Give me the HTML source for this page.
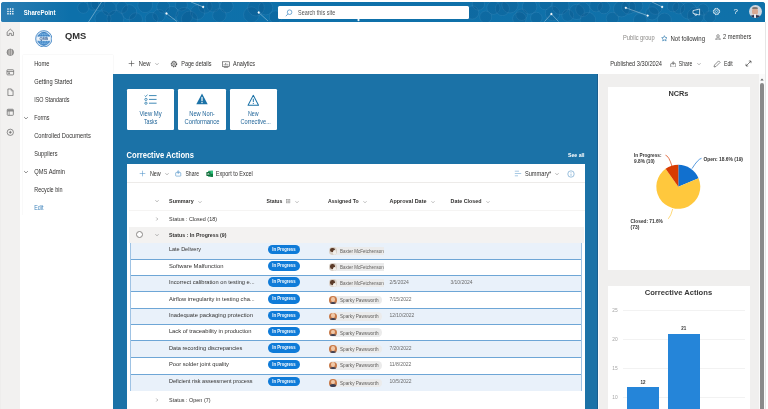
<!DOCTYPE html>
<html lang="en"><head><meta charset="utf-8"><title>QMS - Home</title>
<style>
html,body{margin:0;padding:0;background:#fff;}
body{width:768px;height:409px;position:relative;overflow:hidden;font-family:"Liberation Sans", sans-serif;}
#pg{will-change:transform;}
#pg div,#pg span,#pg svg{position:absolute;}
#pg span{white-space:nowrap;line-height:1;transform-origin:0 50%;}
</style></head><body><div id="pg" style="position:absolute;left:0;top:0;width:768px;height:409px;overflow:hidden">
<div style="left:0.8px;top:2px;width:764.2px;height:19.5px;background:#0d70aa;border-radius:3px 3px 0 2.5px;overflow:hidden"><svg width="765" height="20" viewBox="0 0 765 20" style="left:0;top:0"><defs><linearGradient id="tb" x1="0" x2="1" y1="0" y2="0"><stop offset="0" stop-color="#2a7db3"/><stop offset="0.09" stop-color="#0d70aa"/><stop offset="1" stop-color="#1071a9"/></linearGradient></defs><rect width="765" height="20" fill="url(#tb)"/><g fill="rgba(8,50,100,0.10)" stroke="rgba(170,215,245,0.22)" stroke-width="0.45"><circle cx="82.3" cy="5.7" r="5.6"/><circle cx="92.0" cy="2.6" r="5.7"/><circle cx="96.9" cy="1.8" r="6.8"/><circle cx="102.0" cy="16.8" r="8.0"/><circle cx="108.0" cy="6.4" r="7.2"/><circle cx="114.4" cy="16.7" r="8.4"/><circle cx="121.0" cy="5.4" r="5.9"/><circle cx="128.2" cy="10.2" r="7.5"/><circle cx="134.8" cy="17.4" r="6.6"/><circle cx="144.2" cy="3.2" r="7.4"/><circle cx="150.6" cy="16.8" r="6.4"/><circle cx="157.9" cy="13.6" r="6.2"/><circle cx="162.2" cy="4.7" r="6.4"/><circle cx="170.8" cy="10.7" r="6.4"/><circle cx="180.4" cy="3.0" r="6.0"/><circle cx="183.3" cy="13.8" r="8.4"/><circle cx="188.5" cy="17.2" r="8.1"/><circle cx="196.6" cy="10.3" r="7.2"/><circle cx="204.2" cy="4.3" r="6.9"/><circle cx="212.2" cy="3.7" r="6.4"/><circle cx="218.4" cy="13.4" r="6.7"/><circle cx="225.6" cy="4.3" r="6.6"/><circle cx="250.4" cy="12.7" r="7.8"/><circle cx="255.0" cy="5.7" r="8.3"/><circle cx="264.7" cy="5.8" r="7.1"/><circle cx="274.6" cy="15.1" r="6.3"/><circle cx="471.2" cy="10.5" r="6.6"/><circle cx="477.4" cy="2.0" r="6.2"/><circle cx="484.7" cy="15.0" r="6.0"/><circle cx="492.4" cy="5.8" r="6.6"/><circle cx="501.4" cy="6.6" r="7.0"/><circle cx="509.0" cy="2.9" r="8.1"/><circle cx="518.4" cy="16.7" r="6.7"/><circle cx="520.6" cy="12.7" r="5.7"/><circle cx="528.6" cy="4.8" r="7.3"/><circle cx="535.3" cy="16.0" r="5.8"/><circle cx="544.2" cy="1.7" r="6.1"/><circle cx="551.6" cy="11.4" r="7.3"/><circle cx="559.5" cy="4.0" r="8.5"/><circle cx="566.8" cy="13.4" r="5.9"/><circle cx="575.8" cy="9.9" r="7.6"/><circle cx="581.8" cy="7.4" r="7.1"/><circle cx="586.9" cy="18.2" r="7.8"/><circle cx="595.1" cy="3.6" r="6.3"/><circle cx="602.9" cy="5.6" r="6.2"/><circle cx="611.4" cy="16.5" r="6.2"/><circle cx="620.5" cy="6.9" r="8.0"/><circle cx="627.6" cy="5.1" r="7.0"/><circle cx="635.0" cy="3.9" r="6.9"/><circle cx="639.2" cy="18.4" r="6.8"/><circle cx="651.2" cy="11.4" r="6.6"/><circle cx="654.3" cy="5.9" r="6.5"/><circle cx="663.4" cy="18.0" r="6.9"/><circle cx="671.9" cy="4.0" r="5.9"/><circle cx="677.7" cy="5.9" r="6.0"/><circle cx="687.6" cy="8.8" r="8.3"/><circle cx="694.7" cy="13.7" r="8.3"/><circle cx="702.1" cy="7.5" r="5.6"/><circle cx="708.8" cy="14.9" r="5.9"/></g><g stroke="rgba(255,255,255,0.7)" stroke-width="0.5" fill="#fff"><line x1="87.5" y1="20" x2="100.5" y2="0"/><line x1="165.5" y1="11.5" x2="176" y2="19.5"/><circle cx="165.5" cy="11.5" r="0.9"/><line x1="202.2" y1="4.9" x2="190" y2="0"/><circle cx="202.2" cy="4.9" r="0.9"/><line x1="257.7" y1="10.5" x2="267" y2="19"/><circle cx="257.7" cy="10.5" r="0.9"/><circle cx="357.5" cy="18" r="0.9"/><line x1="550.4" y1="12" x2="543.5" y2="19.5"/><line x1="550.4" y1="12" x2="557.5" y2="19.5"/><circle cx="550.4" cy="12" r="0.9"/><line x1="624.8" y1="5.8" x2="646.7" y2="13.6"/><circle cx="624.8" cy="5.8" r="0.9"/><circle cx="646.7" cy="13.6" r="0.9"/><line x1="661.2" y1="4.9" x2="651" y2="0"/><circle cx="661.2" cy="4.9" r="0.9"/></g></svg></div>
<svg width="7.2" height="7.2" viewBox="0 0 8 8" style="left:6.9px;top:8.2px" fill="#fff"><rect x="0.3" y="0.3" width="1.6" height="1.6" rx="0.4"/><rect x="0.3" y="3.0" width="1.6" height="1.6" rx="0.4"/><rect x="0.3" y="5.7" width="1.6" height="1.6" rx="0.4"/><rect x="3.0" y="0.3" width="1.6" height="1.6" rx="0.4"/><rect x="3.0" y="3.0" width="1.6" height="1.6" rx="0.4"/><rect x="3.0" y="5.7" width="1.6" height="1.6" rx="0.4"/><rect x="5.7" y="0.3" width="1.6" height="1.6" rx="0.4"/><rect x="5.7" y="3.0" width="1.6" height="1.6" rx="0.4"/><rect x="5.7" y="5.7" width="1.6" height="1.6" rx="0.4"/></svg>
<div style="left:278px;top:5.5px;width:191px;height:13.2px;background:#fff;border-radius:1.5px;"></div>
<svg width="8" height="8" viewBox="0 0 8 8" style="left:285px;top:8.5px" fill="none" stroke="#3d86c0" stroke-width="0.7"><circle cx="4.6" cy="3.2" r="2.3"/><line x1="3" y1="4.9" x2="0.8" y2="7.2"/></svg>
<svg width="9" height="8" viewBox="0 0 9 8" style="left:692px;top:7.5px" fill="none" stroke="#fff" stroke-width="0.7" stroke-linejoin="round"><path d="M1 2.6 L7.6 1 L7.6 7 L1 5.4 Z"/><path d="M2.6 5.8 L3 7.2 L4.6 7.2 L4.4 6.2"/></svg>
<svg width="9" height="9" viewBox="0 0 9 9" style="left:711.6px;top:7px" fill="none" stroke="rgba(255,255,255,0.9)" stroke-width="0.7"><circle cx="4.5" cy="4.5" r="3.2" stroke-dasharray="1.5 1" stroke-width="0.9"/><circle cx="4.5" cy="4.5" r="2.7"/><circle cx="4.5" cy="4.5" r="1.1" stroke-width="0.6"/></svg>
<div style="left:748.5px;top:5.4px;width:13px;height:13px;border-radius:50%;overflow:hidden;background:#cfd6df"><div style="left:3.4px;top:2.4px;width:6.2px;height:7.2px;border-radius:45%;background:#d8a892"></div><div style="left:3.2px;top:1.4px;width:6.6px;height:2.6px;border-radius:50% 50% 20% 20%;background:#7d7670"></div><div style="left:0.5px;top:9.3px;width:12px;height:6px;border-radius:45% 45% 0 0;background:#2c3350"></div><div style="left:5.5px;top:9px;width:2px;height:4px;background:#e8e8ee"></div></div>
<div style="left:765px;top:21.5px;width:0.6000000000000227px;height:387.5px;background:#e6e6e6;"></div>
<div style="left:0px;top:22px;width:20.2px;height:387px;background:#f2f1f0;"></div>
<div style="left:0px;top:22px;width:1px;height:387px;background:#eeedec;"></div>
<svg width="8.6" height="8.6" viewBox="0 0 9 9" style="left:6.3px;top:27.999999999999996px" fill="none" stroke="#666" stroke-width="0.75" stroke-linejoin="round"><path d="M1.2 4.2 L4.5 1.2 L7.8 4.2 L7.8 7.8 L5.6 7.8 L5.6 5.6 L3.4 5.6 L3.4 7.8 L1.2 7.8 Z"/></svg>
<svg width="8.6" height="8.6" viewBox="0 0 9 9" style="left:6.3px;top:47.6px" fill="none" stroke="#666" stroke-width="0.75" stroke-linejoin="round"><circle cx="4.5" cy="4.5" r="3.4" fill="#9a9896" stroke="#777"/><path d="M3.3 1.3 L3.3 7.7 M5.7 1.3 L5.7 7.7" stroke="#f0efee" stroke-width="0.5"/></svg>
<svg width="8.6" height="8.6" viewBox="0 0 9 9" style="left:6.3px;top:67.7px" fill="none" stroke="#666" stroke-width="0.75" stroke-linejoin="round"><rect x="1" y="1.8" width="7" height="5.4" rx="0.8"/><path d="M1 3.6 L8 3.6" /><rect x="2.2" y="4.6" width="2" height="1.6" fill="#888" stroke="none"/></svg>
<svg width="8.6" height="8.6" viewBox="0 0 9 9" style="left:6.3px;top:87.7px" fill="none" stroke="#666" stroke-width="0.75" stroke-linejoin="round"><path d="M2 1 L5.6 1 L7.4 2.9 L7.4 8 L2 8 Z"/><path d="M5.4 1 L5.4 3 L7.4 3" stroke-width="0.5"/></svg>
<svg width="8.6" height="8.6" viewBox="0 0 9 9" style="left:6.3px;top:107.7px" fill="none" stroke="#666" stroke-width="0.75" stroke-linejoin="round"><rect x="1.3" y="1.3" width="6.4" height="6.4" rx="0.8"/><path d="M1.3 3.3 L7.7 3.3 M3.3 3.3 L3.3 7.7" stroke-width="0.6"/><rect x="1.6" y="1.6" width="5.8" height="1.5" fill="#888" stroke="none"/></svg>
<svg width="8.6" height="8.6" viewBox="0 0 9 9" style="left:6.3px;top:127.7px" fill="none" stroke="#666" stroke-width="0.75" stroke-linejoin="round"><circle cx="4.5" cy="4.5" r="3.3"/><path d="M4.5 3 L4.5 6 M3 4.5 L6 4.5" stroke-width="0.8"/></svg>
<svg width="17.6" height="17.6" viewBox="0 0 19 19" style="left:34.6px;top:29.5px"><circle cx="9.5" cy="9.5" r="8.8" fill="#dbeaf7" stroke="#3b7fc2" stroke-width="0.9"/><circle cx="9.5" cy="9.5" r="7" fill="#7db6e6" stroke="#3b7fc2" stroke-width="0.4"/><g fill="none" stroke="#2f74b8" stroke-width="0.6"><ellipse cx="9.5" cy="9.5" rx="3.2" ry="7"/><ellipse cx="9.5" cy="9.5" rx="6" ry="7"/><path d="M2.8 6 L16.2 6 M2.8 13 L16.2 13 M9.5 2.5 L9.5 16.5"/></g><rect x="2.2" y="7.4" width="14.6" height="4.2" fill="#eef4fa" rx="0.6"/><text x="9.5" y="11" font-size="4.2" font-weight="700" text-anchor="middle" fill="#1f4f8c" font-family="Liberation Sans, sans-serif">QMS</text></svg>
<svg width="6.8" height="6.8" viewBox="0 0 8 8" style="left:660.6px;top:35.2px" fill="none" stroke="#1e6fa8" stroke-width="0.7" stroke-linejoin="round"><path d="M4 0.8 L4.95 2.9 L7.2 3.15 L5.5 4.7 L6 7 L4 5.85 L2 7 L2.5 4.7 L0.8 3.15 L3.05 2.9 Z"/></svg>
<svg width="6" height="6.8" viewBox="0 0 7 8" style="left:715.4px;top:33.6px" fill="none" stroke="#555" stroke-width="0.7"><circle cx="3.5" cy="2.3" r="1.5"/><path d="M1 7 L1 5.6 Q1 4.8 1.8 4.8 L5.2 4.8 Q6 4.8 6 5.6 L6 7 Z"/></svg>
<div style="left:23.4px;top:54.6px;width:89.6px;height:355px;background:#fff;box-shadow:0 0 1.5px rgba(0,0,0,0.10)"></div>
<div style="left:22px;top:215px;width:91.3px;height:194px;background:#fff;"></div>
<svg width="6" height="4" viewBox="-3 -2 6 4" style="left:23.3px;top:115.8px" fill="none" stroke="#555" stroke-width="0.65"><path d="M-1.9 -0.95 L0 0.95 L1.9 -0.95"/></svg>
<svg width="6" height="4" viewBox="-3 -2 6 4" style="left:23.3px;top:169.9px" fill="none" stroke="#555" stroke-width="0.65"><path d="M-1.9 -0.95 L0 0.95 L1.9 -0.95"/></svg>
<svg width="7" height="7" viewBox="0 0 7 7" style="left:128.2px;top:60.4px" stroke="#444" stroke-width="0.6"><path d="M3.5 0.7 L3.5 6.3 M0.7 3.5 L6.3 3.5"/></svg>
<svg width="6" height="4" viewBox="-3 -2 6 4" style="left:153.7px;top:62.099999999999994px" fill="none" stroke="#777" stroke-width="0.55"><path d="M-1.6 -0.8 L0 0.8 L1.6 -0.8"/></svg>
<svg width="8" height="8" viewBox="0 0 9 9" style="left:170.4px;top:59.9px" fill="none" stroke="#444" stroke-width="0.7"><circle cx="4.5" cy="4.5" r="3" stroke-dasharray="1.3 0.9" stroke-width="1.2"/><circle cx="4.5" cy="4.5" r="2.5"/><circle cx="4.5" cy="4.5" r="1" stroke-width="0.6"/></svg>
<svg width="8" height="7" viewBox="0 0 8 7" style="left:222px;top:60.5px" fill="none" stroke="#444" stroke-width="0.6"><rect x="0.6" y="0.8" width="6.8" height="4.6"/><path d="M1.8 6.4 L6.2 6.4 M2.2 4.4 L2.2 3.2 M3.6 4.4 L3.6 2 M5 4.4 L5 2.8 M6 4.4 L6 3.6" /></svg>
<svg width="6.8" height="6.8" viewBox="0 0 8 8" style="left:669.5px;top:60.7px" fill="none" stroke="#555" stroke-width="0.7"><rect x="0.8" y="3" width="6" height="4.2" rx="0.6"/><path d="M3.8 4.8 L3.8 0.9 M2.4 2.2 L3.8 0.8 L5.2 2.2"/></svg>
<svg width="6" height="4" viewBox="-3 -2 6 4" style="left:696px;top:62.099999999999994px" fill="none" stroke="#777" stroke-width="0.55"><path d="M-1.6 -0.8 L0 0.8 L1.6 -0.8"/></svg>
<svg width="8" height="8" viewBox="0 0 8 8" style="left:713px;top:59.9px" fill="none" stroke="#444" stroke-width="0.6" stroke-linejoin="round"><path d="M1 7 L1.5 5 L5.6 0.9 L7.1 2.4 L3 6.5 Z"/></svg>
<svg width="7" height="7" viewBox="0 0 7 7" style="left:744.5px;top:60.3px" fill="none" stroke="#333" stroke-width="0.6"><path d="M1 6 L6 1 M3.8 1 L6 1 L6 3.2 M1 3.8 L1 6 L3.2 6"/></svg>
<div style="left:113.3px;top:74px;width:484.7px;height:335px;background:#1b72a7;"></div>
<div style="left:126.8px;top:88.5px;width:47.60000000000001px;height:41.0px;background:#fff;border-radius:1.2px;"></div>
<div style="left:178.1px;top:88.5px;width:48.0px;height:41.0px;background:#fff;border-radius:1.2px;"></div>
<div style="left:229.7px;top:88.5px;width:47.30000000000001px;height:41.0px;background:#fff;border-radius:1.2px;"></div>
<svg width="13" height="11" viewBox="0 0 12 11" preserveAspectRatio="none" style="left:144.29999999999998px;top:94.1px" fill="none" stroke="#1b72a7" stroke-width="0.8"><path d="M4.6 1.6 L11.6 1.6 M4.6 5.4 L11.6 5.4 M4.6 9.2 L11.6 9.2"/><path d="M0.6 1.6 L1.6 2.6 L3.2 0.6" stroke-width="0.7"/><circle cx="1.8" cy="5.4" r="1.1" stroke-width="0.7"/><circle cx="1.8" cy="9.2" r="1.1" stroke-width="0.7"/></svg>
<svg width="12" height="12" viewBox="0 0 12 11" preserveAspectRatio="none" style="left:195.9px;top:93.4px"><path d="M6 0.4 L11.7 10.4 L0.3 10.4 Z" fill="#1b72a7"/><rect x="5.4" y="3.6" width="1.2" height="3.8" fill="#fff"/><rect x="5.4" y="8.1" width="1.2" height="1.2" fill="#fff"/></svg>
<svg width="12.6" height="12.4" viewBox="0 0 12 11" preserveAspectRatio="none" style="left:246.8px;top:93.5px"><path d="M6 1.2 L11 10 L1 10 Z" fill="none" stroke="#1b72a7" stroke-width="0.95" stroke-linejoin="round"/><rect x="5.55" y="4.2" width="0.9" height="3" fill="#1b72a7"/><rect x="5.55" y="8" width="0.9" height="0.9" fill="#1b72a7"/></svg>
<div style="left:126.8px;top:163.9px;width:457.99999999999994px;height:245.1px;background:#fff;"></div>
<svg width="7" height="7" viewBox="0 0 7 7" style="left:138.6px;top:169.9px" stroke="#4f93c9" stroke-width="0.55"><path d="M3.5 0.7 L3.5 6.3 M0.7 3.5 L6.3 3.5"/></svg>
<svg width="6" height="4" viewBox="-3 -2 6 4" style="left:163.5px;top:171.6px" fill="none" stroke="#777" stroke-width="0.55"><path d="M-1.6 -0.8 L0 0.8 L1.6 -0.8"/></svg>
<svg width="6.8" height="6.8" viewBox="0 0 8 8" style="left:175.4px;top:170.2px" fill="none" stroke="#4f93c9" stroke-width="0.7"><rect x="0.8" y="3" width="6" height="4.2" rx="0.6"/><path d="M3.8 4.8 L3.8 0.9 M2.4 2.2 L3.8 0.8 L5.2 2.2"/></svg>
<svg width="7.6" height="7.6" viewBox="0 0 8 8" style="left:205.9px;top:169.5px"><rect x="2.2" y="0.8" width="5.3" height="6.4" rx="0.5" fill="#21a366"/><rect x="4.8" y="0.8" width="2.7" height="3.2" fill="#33c481"/><rect x="4.8" y="4" width="2.7" height="3.2" fill="#107c41"/><rect x="0.4" y="2" width="4.2" height="4.2" rx="0.4" fill="#0e6b37"/><path d="M1.5 3 L3.5 5.2 M3.5 3 L1.5 5.2" stroke="#fff" stroke-width="0.6"/></svg>
<svg width="8" height="7" viewBox="0 0 8 7" style="left:514.3px;top:170px" stroke="#6fa6d2" stroke-width="0.6"><path d="M0.8 1.2 L5 1.2 M0.8 3.5 L7.2 3.5 M0.8 5.8 L4 5.8"/></svg>
<svg width="6" height="4" viewBox="-3 -2 6 4" style="left:554.2px;top:171.6px" fill="none" stroke="#777" stroke-width="0.55"><path d="M-1.6 -0.8 L0 0.8 L1.6 -0.8"/></svg>
<svg width="8" height="8" viewBox="0 0 8 8" style="left:566.7px;top:169.5px" fill="none" stroke="#3a82bc" stroke-width="0.5"><circle cx="4" cy="4" r="3.2"/><path d="M4 3.6 L4 5.8 M4 2.2 L4 2.9"/></svg>
<div style="left:126.8px;top:181.8px;width:457.99999999999994px;height:0.5px;background:#edebe9;"></div>
<svg width="6" height="4" viewBox="-3 -2 6 4" style="left:154px;top:199.4px" fill="none" stroke="#777" stroke-width="0.55"><path d="M-1.6 -0.8 L0 0.8 L1.6 -0.8"/></svg>
<svg width="6" height="4" viewBox="-3 -2 6 4" style="left:196.5px;top:199.5px" fill="none" stroke="#888" stroke-width="0.55"><path d="M-1.6 -0.8 L0 0.8 L1.6 -0.8"/></svg>
<svg width="5" height="5" viewBox="0 0 5 5" style="left:285.6px;top:198.9px" fill="none" stroke="#888" stroke-width="0.5"><rect x="0.5" y="0.5" width="3.4" height="3.4"/><path d="M0.5 2.2 L3.9 2.2 M2.2 0.5 L2.2 3.9"/></svg>
<svg width="6" height="4" viewBox="-3 -2 6 4" style="left:293.5px;top:199.5px" fill="none" stroke="#888" stroke-width="0.55"><path d="M-1.6 -0.8 L0 0.8 L1.6 -0.8"/></svg>
<svg width="6" height="4" viewBox="-3 -2 6 4" style="left:361.7px;top:199.5px" fill="none" stroke="#888" stroke-width="0.55"><path d="M-1.6 -0.8 L0 0.8 L1.6 -0.8"/></svg>
<svg width="6" height="4" viewBox="-3 -2 6 4" style="left:429.5px;top:199.5px" fill="none" stroke="#888" stroke-width="0.55"><path d="M-1.6 -0.8 L0 0.8 L1.6 -0.8"/></svg>
<svg width="6" height="4" viewBox="-3 -2 6 4" style="left:484.5px;top:199.5px" fill="none" stroke="#888" stroke-width="0.55"><path d="M-1.6 -0.8 L0 0.8 L1.6 -0.8"/></svg>
<div style="left:128.8px;top:209.5px;width:455.99999999999994px;height:0.5px;background:#f5f4f3;"></div>
<svg width="4" height="6" viewBox="-2 -3 4 6" style="left:155px;top:215.7px" fill="none" stroke="#777" stroke-width="0.55"><path d="M-0.75 -1.5 L0.75 0 L-0.75 1.5"/></svg>
<div style="left:128.8px;top:226.9px;width:454.90000000000003px;height:15.799999999999983px;background:#f3f2f1;"></div>
<div style="left:135.9px;top:231.1px;width:7.2px;height:7.2px;border:0.55px solid #8a8886;border-radius:50%;background:#fff;box-sizing:border-box"></div>
<svg width="6" height="4" viewBox="-3 -2 6 4" style="left:153.8px;top:233.1px" fill="none" stroke="#777" stroke-width="0.55"><path d="M-1.6 -0.8 L0 0.8 L1.6 -0.8"/></svg>
<div style="left:130.3px;top:242.7px;width:451.49999999999994px;height:16.400000000000034px;background:#e9f1fa;"></div>
<div style="left:268.4px;top:245.00px;width:31.2px;height:9.4px;border-radius:5px;background:#0f7bd8"></div>
<div style="left:328.6px;top:246.50px;width:55.6px;height:8.6px;background:#ebebeb;border-radius:4.3px 0 0 4.3px"></div>
<div style="left:329.2px;top:247.00px;width:7.6px;height:7.6px;border-radius:50%;overflow:hidden;background:#d8cfc6"><div style="left:1px;top:0.6px;width:4.6px;height:4.6px;border-radius:50%;background:#5a3a28"></div><div style="left:3.4px;top:3.2px;width:3.8px;height:4.6px;border-radius:50%;background:#f2eee8"></div></div>
<div style="left:130.3px;top:259.1px;width:451.49999999999994px;height:15.899999999999977px;background:#fff;"></div>
<div style="left:130.3px;top:258.75px;width:451.49999999999994px;height:0.6999999999999886px;background:#6ea6d6;"></div>
<div style="left:268.4px;top:261.40px;width:31.2px;height:9.4px;border-radius:5px;background:#0f7bd8"></div>
<div style="left:328.6px;top:262.90px;width:55.6px;height:8.6px;background:#ebebeb;border-radius:4.3px 0 0 4.3px"></div>
<div style="left:329.2px;top:263.40px;width:7.6px;height:7.6px;border-radius:50%;overflow:hidden;background:#d8cfc6"><div style="left:1px;top:0.6px;width:4.6px;height:4.6px;border-radius:50%;background:#5a3a28"></div><div style="left:3.4px;top:3.2px;width:3.8px;height:4.6px;border-radius:50%;background:#f2eee8"></div></div>
<div style="left:130.3px;top:275.0px;width:451.49999999999994px;height:16.399999999999977px;background:#e9f1fa;"></div>
<div style="left:130.3px;top:274.65px;width:451.49999999999994px;height:0.7000000000000455px;background:#6ea6d6;"></div>
<div style="left:268.4px;top:277.40px;width:31.2px;height:9.4px;border-radius:5px;background:#0f7bd8"></div>
<div style="left:328.6px;top:278.90px;width:55.6px;height:8.6px;background:#ebebeb;border-radius:4.3px 0 0 4.3px"></div>
<div style="left:329.2px;top:279.40px;width:7.6px;height:7.6px;border-radius:50%;overflow:hidden;background:#d8cfc6"><div style="left:1px;top:0.6px;width:4.6px;height:4.6px;border-radius:50%;background:#5a3a28"></div><div style="left:3.4px;top:3.2px;width:3.8px;height:4.6px;border-radius:50%;background:#f2eee8"></div></div>
<div style="left:130.3px;top:291.4px;width:451.49999999999994px;height:16.5px;background:#fff;"></div>
<div style="left:130.3px;top:291.05px;width:451.49999999999994px;height:0.6999999999999886px;background:#6ea6d6;"></div>
<div style="left:268.4px;top:294.30px;width:31.2px;height:9.4px;border-radius:5px;background:#0f7bd8"></div>
<div style="left:328.6px;top:295.80px;width:53px;height:8.6px;background:#ebebeb;border-radius:4.3px"></div>
<div style="left:329.2px;top:296.30px;width:7.6px;height:7.6px;border-radius:50%;overflow:hidden;background:#c97b4a"><div style="left:1.8px;top:0.8px;width:4px;height:4.6px;border-radius:50%;background:#f0c8a8"></div><div style="left:0.8px;top:5.4px;width:6px;height:3px;border-radius:50% 50% 0 0;background:#3a3f55"></div></div>
<div style="left:130.3px;top:307.9px;width:451.49999999999994px;height:16.400000000000034px;background:#e9f1fa;"></div>
<div style="left:130.3px;top:307.55px;width:451.49999999999994px;height:0.6999999999999886px;background:#6ea6d6;"></div>
<div style="left:268.4px;top:310.70px;width:31.2px;height:9.4px;border-radius:5px;background:#0f7bd8"></div>
<div style="left:328.6px;top:312.20px;width:53px;height:8.6px;background:#ebebeb;border-radius:4.3px"></div>
<div style="left:329.2px;top:312.70px;width:7.6px;height:7.6px;border-radius:50%;overflow:hidden;background:#c97b4a"><div style="left:1.8px;top:0.8px;width:4px;height:4.6px;border-radius:50%;background:#f0c8a8"></div><div style="left:0.8px;top:5.4px;width:6px;height:3px;border-radius:50% 50% 0 0;background:#3a3f55"></div></div>
<div style="left:130.3px;top:324.3px;width:451.49999999999994px;height:16.399999999999977px;background:#fff;"></div>
<div style="left:130.3px;top:323.95px;width:451.49999999999994px;height:0.6999999999999886px;background:#6ea6d6;"></div>
<div style="left:268.4px;top:326.90px;width:31.2px;height:9.4px;border-radius:5px;background:#0f7bd8"></div>
<div style="left:328.6px;top:328.40px;width:53px;height:8.6px;background:#ebebeb;border-radius:4.3px"></div>
<div style="left:329.2px;top:328.90px;width:7.6px;height:7.6px;border-radius:50%;overflow:hidden;background:#c97b4a"><div style="left:1.8px;top:0.8px;width:4px;height:4.6px;border-radius:50%;background:#f0c8a8"></div><div style="left:0.8px;top:5.4px;width:6px;height:3px;border-radius:50% 50% 0 0;background:#3a3f55"></div></div>
<div style="left:130.3px;top:340.7px;width:451.49999999999994px;height:16.80000000000001px;background:#e9f1fa;"></div>
<div style="left:130.3px;top:340.35px;width:451.49999999999994px;height:0.6999999999999886px;background:#6ea6d6;"></div>
<div style="left:268.4px;top:343.40px;width:31.2px;height:9.4px;border-radius:5px;background:#0f7bd8"></div>
<div style="left:328.6px;top:344.90px;width:53px;height:8.6px;background:#ebebeb;border-radius:4.3px"></div>
<div style="left:329.2px;top:345.40px;width:7.6px;height:7.6px;border-radius:50%;overflow:hidden;background:#c97b4a"><div style="left:1.8px;top:0.8px;width:4px;height:4.6px;border-radius:50%;background:#f0c8a8"></div><div style="left:0.8px;top:5.4px;width:6px;height:3px;border-radius:50% 50% 0 0;background:#3a3f55"></div></div>
<div style="left:130.3px;top:357.5px;width:451.49999999999994px;height:16.80000000000001px;background:#fff;"></div>
<div style="left:130.3px;top:357.15px;width:451.49999999999994px;height:0.7000000000000455px;background:#6ea6d6;"></div>
<div style="left:268.4px;top:359.60px;width:31.2px;height:9.4px;border-radius:5px;background:#0f7bd8"></div>
<div style="left:328.6px;top:361.10px;width:53px;height:8.6px;background:#ebebeb;border-radius:4.3px"></div>
<div style="left:329.2px;top:361.60px;width:7.6px;height:7.6px;border-radius:50%;overflow:hidden;background:#c97b4a"><div style="left:1.8px;top:0.8px;width:4px;height:4.6px;border-radius:50%;background:#f0c8a8"></div><div style="left:0.8px;top:5.4px;width:6px;height:3px;border-radius:50% 50% 0 0;background:#3a3f55"></div></div>
<div style="left:130.3px;top:374.3px;width:451.49999999999994px;height:16.399999999999977px;background:#e9f1fa;"></div>
<div style="left:130.3px;top:373.95px;width:451.49999999999994px;height:0.6999999999999886px;background:#6ea6d6;"></div>
<div style="left:268.4px;top:377.10px;width:31.2px;height:9.4px;border-radius:5px;background:#0f7bd8"></div>
<div style="left:328.6px;top:378.60px;width:53px;height:8.6px;background:#ebebeb;border-radius:4.3px"></div>
<div style="left:329.2px;top:379.10px;width:7.6px;height:7.6px;border-radius:50%;overflow:hidden;background:#c97b4a"><div style="left:1.8px;top:0.8px;width:4px;height:4.6px;border-radius:50%;background:#f0c8a8"></div><div style="left:0.8px;top:5.4px;width:6px;height:3px;border-radius:50% 50% 0 0;background:#3a3f55"></div></div>
<div style="left:130.0px;top:242.7px;width:0.6999999999999886px;height:148.0px;background:#9fc3e4;"></div>
<div style="left:581.2px;top:242.7px;width:0.6999999999999318px;height:148.0px;background:#9fc3e4;"></div>
<svg width="4" height="6" viewBox="-2 -3 4 6" style="left:154.8px;top:396.6px" fill="none" stroke="#777" stroke-width="0.55"><path d="M-0.75 -1.5 L0.75 0 L-0.75 1.5"/></svg>
<div style="left:598px;top:74px;width:160.60000000000002px;height:335px;background:#f0efee;"></div>
<div style="left:596.7px;top:74px;width:1.0px;height:335px;background:#185d8e;"></div>
<div style="left:597.7px;top:74px;width:0.8999999999999773px;height:335px;background:#f6fafc;"></div>
<div style="left:758.6px;top:74px;width:6.399999999999977px;height:335px;background:#fafafa;"></div>
<div style="left:760.3px;top:83px;width:3.8px;height:330px;border-radius:2px;background:#8a8a8a"></div>
<svg width="4" height="3" viewBox="0 0 4 3" style="left:760.2px;top:78px"><path d="M0.3 2.6 L2 0.5 L3.7 2.6 Z" fill="#666"/></svg>
<div style="left:607.6px;top:86.9px;width:142.0px;height:183.20000000000002px;background:#fff;"></div>
<svg width="768" height="409" viewBox="0 0 768 409" style="left:0;top:0;pointer-events:none"><path d="M678.3 186.8 L678.30 164.80 A22 22 0 0 1 698.55 178.19 Z" fill="#1170cf"/><path d="M678.3 186.8 L698.55 178.19 A22 22 0 1 1 665.59 168.84 Z" fill="#ffc83d"/><path d="M678.3 186.8 L665.59 168.84 A22 22 0 0 1 678.30 164.80 Z" fill="#d83b01"/><g fill="none" stroke-width="0.7"><path d="M665.5 155.2 Q669 156 672 166.4" stroke="#d83b01"/><path d="M701.5 158.3 Q698 159 692 168.6" stroke="#1170cf"/><path d="M672.7 209 Q671 216 668.3 218.8" stroke="#ffc83d"/></g></svg>
<div style="left:607.6px;top:285.8px;width:142.0px;height:123.19999999999999px;background:#fff;"></div>
<div style="left:623.2px;top:309.75px;width:121.5px;height:0.5px;background:#f2f2f2;"></div>
<div style="left:623.2px;top:338.85px;width:121.5px;height:0.5px;background:#f2f2f2;"></div>
<div style="left:623.2px;top:367.95px;width:121.5px;height:0.5px;background:#f2f2f2;"></div>
<div style="left:623.2px;top:397.15px;width:121.5px;height:0.5px;background:#f2f2f2;"></div>
<div style="left:627.3px;top:387px;width:31.600000000000023px;height:22px;background:#2585d9;"></div>
<div style="left:668px;top:333.9px;width:31.600000000000023px;height:75.10000000000002px;background:#2585d9;"></div>
<span style="left:0;top:0;font-size:7.19px;font-weight:700;color:#fff;transform:translate(23.7px,12.10px) translateY(-50%) scaleX(0.838);">SharePoint</span>
<span style="left:0;top:0;font-size:6.32px;font-weight:400;color:#555;transform:translate(298px,13.10px) translateY(-50%) scaleX(0.864);">Search this site</span>
<span style="left:0;top:0;font-size:8px;font-weight:400;color:#fff;transform:translate(733.6px,12.00px) translateY(-50%) scaleX(1.000);">?</span>
<span style="left:0;top:0;font-size:8.8px;font-weight:700;color:#2e2e2e;transform:translate(64.9px,36.80px) translateY(-50%) scaleX(1.063);">QMS</span>
<span style="left:0;top:0;font-size:6.32px;font-weight:400;color:#8a8886;transform:translate(623px,38.60px) translateY(-50%) scaleX(0.903);">Public group</span>
<span style="left:0;top:0;font-size:6.32px;font-weight:400;color:#323130;transform:translate(670.5px,38.90px) translateY(-50%) scaleX(0.955);">Not following</span>
<span style="left:0;top:0;font-size:6.32px;font-weight:400;color:#323130;transform:translate(723px,37.60px) translateY(-50%) scaleX(0.899);">2 members</span>
<span style="left:0;top:0;font-size:6.32px;font-weight:400;color:#323130;transform:translate(34.2px,64.00px) translateY(-50%) scaleX(0.908);">Home</span>
<span style="left:0;top:0;font-size:6.32px;font-weight:400;color:#323130;transform:translate(34.2px,82.00px) translateY(-50%) scaleX(0.902);">Getting Started</span>
<span style="left:0;top:0;font-size:6.32px;font-weight:400;color:#323130;transform:translate(34.2px,100.00px) translateY(-50%) scaleX(0.853);">ISO Standards</span>
<span style="left:0;top:0;font-size:6.32px;font-weight:400;color:#323130;transform:translate(34.2px,117.90px) translateY(-50%) scaleX(0.855);">Forms</span>
<span style="left:0;top:0;font-size:6.32px;font-weight:400;color:#323130;transform:translate(34.2px,136.00px) translateY(-50%) scaleX(0.906);">Controlled Documents</span>
<span style="left:0;top:0;font-size:6.32px;font-weight:400;color:#323130;transform:translate(34.2px,154.00px) translateY(-50%) scaleX(0.885);">Suppliers</span>
<span style="left:0;top:0;font-size:6.32px;font-weight:400;color:#323130;transform:translate(34.2px,172.00px) translateY(-50%) scaleX(0.914);">QMS Admin</span>
<span style="left:0;top:0;font-size:6.32px;font-weight:400;color:#323130;transform:translate(34.2px,189.90px) translateY(-50%) scaleX(0.867);">Recycle bin</span>
<span style="left:0;top:0;font-size:6.32px;font-weight:400;color:#3a80ba;transform:translate(34.2px,207.90px) translateY(-50%) scaleX(0.854);">Edit</span>
<span style="left:0;top:0;font-size:6.32px;font-weight:400;color:#323130;transform:translate(138.8px,64.20px) translateY(-50%) scaleX(0.910);">New</span>
<span style="left:0;top:0;font-size:6.32px;font-weight:400;color:#323130;transform:translate(181.3px,64.20px) translateY(-50%) scaleX(0.866);">Page details</span>
<span style="left:0;top:0;font-size:6.32px;font-weight:400;color:#323130;transform:translate(233px,64.20px) translateY(-50%) scaleX(0.871);">Analytics</span>
<span style="left:0;top:0;font-size:6.32px;font-weight:400;color:#323130;transform:translate(610.3px,64.20px) translateY(-50%) scaleX(0.898);">Published 3/30/2024</span>
<span style="left:0;top:0;font-size:6.32px;font-weight:400;color:#323130;transform:translate(678.8px,64.20px) translateY(-50%) scaleX(0.801);">Share</span>
<span style="left:0;top:0;font-size:6.32px;font-weight:400;color:#323130;transform:translate(724px,64.20px) translateY(-50%) scaleX(0.808);">Edit</span>
<span style="left:0;top:0;font-size:6.32px;font-weight:400;color:#25689b;transform:translate(139.45px,113.80px) translateY(-50%) scaleX(0.939);">View My</span>
<span style="left:0;top:0;font-size:6.32px;font-weight:400;color:#25689b;transform:translate(143.95px,121.90px) translateY(-50%) scaleX(0.824);">Tasks</span>
<span style="left:0;top:0;font-size:6.32px;font-weight:400;color:#25689b;transform:translate(189.25px,113.80px) translateY(-50%) scaleX(0.908);">New Non-</span>
<span style="left:0;top:0;font-size:6.32px;font-weight:400;color:#25689b;transform:translate(184.5px,121.90px) translateY(-50%) scaleX(0.923);">Conformance</span>
<span style="left:0;top:0;font-size:6.32px;font-weight:400;color:#25689b;transform:translate(248.0px,113.80px) translateY(-50%) scaleX(0.839);">New</span>
<span style="left:0;top:0;font-size:6.32px;font-weight:400;color:#25689b;transform:translate(240.5px,121.90px) translateY(-50%) scaleX(0.893);">Corrective...</span>
<span style="left:0;top:0;font-size:8.4px;font-weight:700;color:#fff;transform:translate(126.6px,154.80px) translateY(-50%) scaleX(0.908);">Corrective Actions</span>
<span style="left:0;top:0;font-size:6.1px;font-weight:700;color:#fff;transform:translate(568px,155.20px) translateY(-50%) scaleX(0.854);">See all</span>
<span style="left:0;top:0;font-size:6.32px;font-weight:400;color:#323130;transform:translate(149.9px,173.70px) translateY(-50%) scaleX(0.854);">New</span>
<span style="left:0;top:0;font-size:6.32px;font-weight:400;color:#323130;transform:translate(185.5px,173.70px) translateY(-50%) scaleX(0.801);">Share</span>
<span style="left:0;top:0;font-size:6.32px;font-weight:400;color:#323130;transform:translate(215.8px,173.70px) translateY(-50%) scaleX(0.872);">Export to Excel</span>
<span style="left:0;top:0;font-size:6.32px;font-weight:400;color:#323130;transform:translate(524.9px,174.30px) translateY(-50%) scaleX(0.896);">Summary*</span>
<span style="left:0;top:0;font-size:6.21px;font-weight:700;color:#323130;transform:translate(169.1px,201.10px) translateY(-50%) scaleX(0.870);">Summary</span>
<span style="left:0;top:0;font-size:6.21px;font-weight:700;color:#323130;transform:translate(266.6px,201.10px) translateY(-50%) scaleX(0.833);">Status</span>
<span style="left:0;top:0;font-size:6.21px;font-weight:700;color:#323130;transform:translate(328px,201.10px) translateY(-50%) scaleX(0.835);">Assigned To</span>
<span style="left:0;top:0;font-size:6.21px;font-weight:700;color:#323130;transform:translate(389.5px,201.10px) translateY(-50%) scaleX(0.880);">Approval Date</span>
<span style="left:0;top:0;font-size:6.21px;font-weight:700;color:#323130;transform:translate(450.6px,201.10px) translateY(-50%) scaleX(0.862);">Date Closed</span>
<span style="left:0;top:0;font-size:6.21px;font-weight:400;color:#323130;transform:translate(169.1px,219.10px) translateY(-50%) scaleX(0.874);">Status : Closed (18)</span>
<span style="left:0;top:0;font-size:6.21px;font-weight:700;color:#323130;transform:translate(169.1px,235.20px) translateY(-50%) scaleX(0.845);">Status : In Progress (9)</span>
<span style="left:0;top:0;font-size:6.21px;font-weight:400;color:#323130;transform:translate(168.9px,249.20px) translateY(-50%) scaleX(0.887);">Late Delivery</span>
<span style="left:0;top:0;font-size:5.34px;font-weight:700;color:#fff;transform:translate(272.3px,249.60px) translateY(-50%) scaleX(0.791);">In Progress</span>
<span style="left:0;top:0;font-size:5.34px;font-weight:400;color:#605e5c;transform:translate(340px,251.40px) translateY(-50%) scaleX(0.845);">Baxter McFetchenson</span>
<span style="left:0;top:0;font-size:6.21px;font-weight:400;color:#323130;transform:translate(168.9px,266.10px) translateY(-50%) scaleX(0.941);">Software Malfunction</span>
<span style="left:0;top:0;font-size:5.34px;font-weight:700;color:#fff;transform:translate(272.3px,266.00px) translateY(-50%) scaleX(0.791);">In Progress</span>
<span style="left:0;top:0;font-size:5.34px;font-weight:400;color:#605e5c;transform:translate(340px,267.80px) translateY(-50%) scaleX(0.845);">Baxter McFetchenson</span>
<span style="left:0;top:0;font-size:6.21px;font-weight:400;color:#323130;transform:translate(168.9px,282.10px) translateY(-50%) scaleX(0.920);">Incorrect calibration on testing e...</span>
<span style="left:0;top:0;font-size:5.34px;font-weight:700;color:#fff;transform:translate(272.3px,282.00px) translateY(-50%) scaleX(0.791);">In Progress</span>
<span style="left:0;top:0;font-size:5.34px;font-weight:400;color:#605e5c;transform:translate(340px,283.80px) translateY(-50%) scaleX(0.845);">Baxter McFetchenson</span>
<span style="left:0;top:0;font-size:5.56px;font-weight:400;color:#6b6b6b;transform:translate(389.4px,282.50px) translateY(-50%) scaleX(0.903);">2/5/2024</span>
<span style="left:0;top:0;font-size:5.56px;font-weight:400;color:#6b6b6b;transform:translate(450.4px,282.50px) translateY(-50%) scaleX(0.891);">3/10/2024</span>
<span style="left:0;top:0;font-size:6.21px;font-weight:400;color:#323130;transform:translate(168.9px,298.90px) translateY(-50%) scaleX(0.924);">Airflow irregularity in testing cha...</span>
<span style="left:0;top:0;font-size:5.34px;font-weight:700;color:#fff;transform:translate(272.3px,298.90px) translateY(-50%) scaleX(0.791);">In Progress</span>
<span style="left:0;top:0;font-size:5.34px;font-weight:400;color:#605e5c;transform:translate(340px,300.70px) translateY(-50%) scaleX(0.873);">Sparky Pawsworth</span>
<span style="left:0;top:0;font-size:5.56px;font-weight:400;color:#6b6b6b;transform:translate(389.4px,299.40px) translateY(-50%) scaleX(0.891);">7/15/2022</span>
<span style="left:0;top:0;font-size:6.21px;font-weight:400;color:#323130;transform:translate(168.9px,315.40px) translateY(-50%) scaleX(0.934);">Inadequate packaging protection</span>
<span style="left:0;top:0;font-size:5.34px;font-weight:700;color:#fff;transform:translate(272.3px,315.30px) translateY(-50%) scaleX(0.791);">In Progress</span>
<span style="left:0;top:0;font-size:5.34px;font-weight:400;color:#605e5c;transform:translate(340px,317.10px) translateY(-50%) scaleX(0.873);">Sparky Pawsworth</span>
<span style="left:0;top:0;font-size:5.56px;font-weight:400;color:#6b6b6b;transform:translate(389.4px,315.80px) translateY(-50%) scaleX(0.900);">12/10/2022</span>
<span style="left:0;top:0;font-size:6.21px;font-weight:400;color:#323130;transform:translate(168.9px,331.60px) translateY(-50%) scaleX(0.932);">Lack of traceability in production</span>
<span style="left:0;top:0;font-size:5.34px;font-weight:700;color:#fff;transform:translate(272.3px,331.50px) translateY(-50%) scaleX(0.791);">In Progress</span>
<span style="left:0;top:0;font-size:5.34px;font-weight:400;color:#605e5c;transform:translate(340px,333.30px) translateY(-50%) scaleX(0.873);">Sparky Pawsworth</span>
<span style="left:0;top:0;font-size:6.21px;font-weight:400;color:#323130;transform:translate(168.9px,348.10px) translateY(-50%) scaleX(0.914);">Data recording discrepancies</span>
<span style="left:0;top:0;font-size:5.34px;font-weight:700;color:#fff;transform:translate(272.3px,348.00px) translateY(-50%) scaleX(0.791);">In Progress</span>
<span style="left:0;top:0;font-size:5.34px;font-weight:400;color:#605e5c;transform:translate(340px,349.80px) translateY(-50%) scaleX(0.873);">Sparky Pawsworth</span>
<span style="left:0;top:0;font-size:5.56px;font-weight:400;color:#6b6b6b;transform:translate(389.4px,348.50px) translateY(-50%) scaleX(0.891);">7/20/2022</span>
<span style="left:0;top:0;font-size:6.21px;font-weight:400;color:#323130;transform:translate(168.9px,364.30px) translateY(-50%) scaleX(0.932);">Poor solder joint quality</span>
<span style="left:0;top:0;font-size:5.34px;font-weight:700;color:#fff;transform:translate(272.3px,364.20px) translateY(-50%) scaleX(0.791);">In Progress</span>
<span style="left:0;top:0;font-size:5.34px;font-weight:400;color:#605e5c;transform:translate(340px,366.00px) translateY(-50%) scaleX(0.873);">Sparky Pawsworth</span>
<span style="left:0;top:0;font-size:5.56px;font-weight:400;color:#6b6b6b;transform:translate(389.4px,364.70px) translateY(-50%) scaleX(0.907);">11/8/2022</span>
<span style="left:0;top:0;font-size:6.21px;font-weight:400;color:#323130;transform:translate(168.9px,381.40px) translateY(-50%) scaleX(0.891);">Deficient risk assessment process</span>
<span style="left:0;top:0;font-size:5.34px;font-weight:700;color:#fff;transform:translate(272.3px,381.70px) translateY(-50%) scaleX(0.791);">In Progress</span>
<span style="left:0;top:0;font-size:5.34px;font-weight:400;color:#605e5c;transform:translate(340px,383.50px) translateY(-50%) scaleX(0.873);">Sparky Pawsworth</span>
<span style="left:0;top:0;font-size:5.56px;font-weight:400;color:#6b6b6b;transform:translate(389.4px,382.20px) translateY(-50%) scaleX(0.891);">10/5/2022</span>
<span style="left:0;top:0;font-size:6.21px;font-weight:400;color:#323130;transform:translate(169.1px,400.00px) translateY(-50%) scaleX(0.878);">Status : Open (7)</span>
<span style="left:0;top:0;font-size:7.4px;font-weight:700;color:#383838;transform:translate(668.4px,94.10px) translateY(-50%) scaleX(0.994);">NCRs</span>
<span style="left:0;top:0;font-size:5.45px;font-weight:700;color:#333;transform:translate(634px,155.80px) translateY(-50%) scaleX(0.867);">In Progress:</span>
<span style="left:0;top:0;font-size:5.45px;font-weight:700;color:#333;transform:translate(634px,161.70px) translateY(-50%) scaleX(0.878);">9.8% (10)</span>
<span style="left:0;top:0;font-size:5.45px;font-weight:700;color:#333;transform:translate(703.4px,160.00px) translateY(-50%) scaleX(0.904);">Open: 18.6% (19)</span>
<span style="left:0;top:0;font-size:5.45px;font-weight:700;color:#333;transform:translate(630.6px,221.80px) translateY(-50%) scaleX(0.873);">Closed: 71.6%</span>
<span style="left:0;top:0;font-size:5.45px;font-weight:700;color:#333;transform:translate(630.6px,227.40px) translateY(-50%) scaleX(0.910);">(73)</span>
<span style="left:0;top:0;font-size:7.5px;font-weight:700;color:#383838;transform:translate(644.7px,293.10px) translateY(-50%) scaleX(1.016);">Corrective Actions</span>
<span style="left:0;top:0;font-size:5.23px;font-weight:400;color:#a6a6a6;transform:translate(612.2px,310.70px) translateY(-50%) scaleX(0.929);">25</span>
<span style="left:0;top:0;font-size:5.23px;font-weight:400;color:#a6a6a6;transform:translate(612.2px,339.80px) translateY(-50%) scaleX(0.929);">20</span>
<span style="left:0;top:0;font-size:5.23px;font-weight:400;color:#a6a6a6;transform:translate(612.2px,368.90px) translateY(-50%) scaleX(0.929);">15</span>
<span style="left:0;top:0;font-size:5.23px;font-weight:400;color:#a6a6a6;transform:translate(612.2px,398.10px) translateY(-50%) scaleX(0.929);">10</span>
<span style="left:0;top:0;font-size:5.23px;font-weight:700;color:#333;transform:translate(640.6px,382.70px) translateY(-50%) scaleX(0.860);">12</span>
<span style="left:0;top:0;font-size:5.23px;font-weight:700;color:#333;transform:translate(681.3px,328.20px) translateY(-50%) scaleX(0.860);">21</span>
</div></body></html>
